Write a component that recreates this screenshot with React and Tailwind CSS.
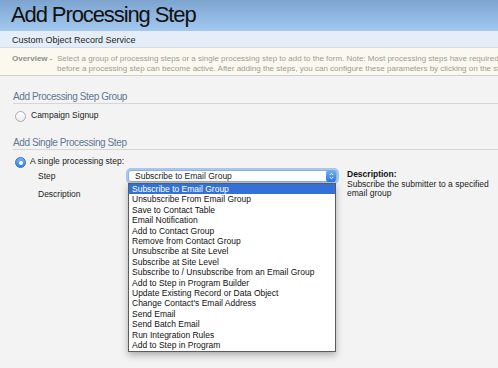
import React from "react";

const steps = [
  "Subscribe to Email Group",
  "Unsubscribe From Email Group",
  "Save to Contact Table",
  "Email Notification",
  "Add to Contact Group",
  "Remove from Contact Group",
  "Unsubscribe at Site Level",
  "Subscribe at Site Level",
  "Subscribe to / Unsubscribe from an Email Group",
  "Add to Step in Program Builder",
  "Update Existing Record or Data Object",
  "Change Contact's Email Address",
  "Send Email",
  "Send Batch Email",
  "Run Integration Rules",
  "Add to Step in Program",
];

const Radio = ({ checked }) =>
  checked ? (
    <span className="flex h-[11px] w-[11px] shrink-0 items-center justify-center rounded-full border border-[#2f6fc9] bg-gradient-to-b from-[#7ab4f5] to-[#2f7ee3]">
      <span className="h-[4px] w-[4px] rounded-full bg-white" />
    </span>
  ) : (
    <span className="h-[11px] w-[11px] shrink-0 rounded-full border border-[#a9a9a9] bg-gradient-to-b from-white to-[#ececec]" />
  );

export default function App() {
  return (
    <div className="h-[368px] w-[498px] overflow-hidden bg-[#f3f3f3] font-['Liberation_Sans',Arial,sans-serif] text-[8.5px] text-[#222]">
      {/* Header */}
      <div className="h-[31px] bg-gradient-to-b from-[#7ca4cf] to-[#a3c9f0] pl-[11px]">
        <h1 className="text-[22px] leading-[30px] tracking-[-1.1px] text-[#111]">
          Add Processing Step
        </h1>
      </div>
      <div className="h-[17px] border-b border-[#d3dce8] bg-[#e4edf8] pl-[12px] pt-[3px] text-[9px] leading-[13px] text-[#1e1e1e]">
        Custom Object Record Service
      </div>

      {/* Overview */}
      <div className="flex h-[28px] border-b border-[#cfcfcf] bg-[#fbf9ee] pl-[12px] pt-[6px] text-[8px] leading-[10px] text-[#9b9b9b]">
        <span className="w-[45px] shrink-0 font-bold text-[#8e8e8e]">Overview -</span>
        <div className="whitespace-nowrap">
          <div>
            Select a group of processing steps or a single processing step to add to the form. Note: Most processing steps have required parameters that must be configured
          </div>
          <div>
            before a processing step can become active. After adding the steps, you can configure these parameters by clicking on the step name.
          </div>
        </div>
      </div>

      {/* Group */}
      <h2 className="ml-[13px] mt-[15px] border-b border-[#d6d6d6] text-[10px] leading-[12px] tracking-[-0.4px] text-[#5f7893]">
        Add Processing Step Group
      </h2>
      <div className="mt-[7px] flex items-start pl-[15px]">
        <Radio />
        <span className="ml-[5px] leading-[8px]">Campaign Signup</span>
      </div>

      {/* Single */}
      <h2 className="ml-[13px] mt-[15px] border-b border-[#d6d6d6] text-[10px] leading-[12px] tracking-[-0.4px] text-[#5f7893]">
        Add Single Processing Step
      </h2>
      <div className="mt-[7px] flex items-start pl-[15px]">
        <Radio checked />
        <span className="ml-[4px] leading-[8px]">A single processing step:</span>
      </div>

      <div className="mt-[2px] flex">
        <div className="w-[337px]">
          <div className="flex h-[12px] items-center">
            <span className="w-[128px] shrink-0 pl-[38px] leading-[12px]">Step</span>
            <div className="relative h-[12px] w-[209px]">
              <div className="flex h-full items-center rounded-[3px] border border-[#8fb0dd] bg-white pl-[6px] shadow-[0_0_0_2px_rgba(110,160,230,0.55)]">
                <span className="flex-1 leading-[10px]">Subscribe to Email Group</span>
                <span className="flex h-[12px] w-[10px] items-center justify-center rounded-[3px] bg-gradient-to-b from-[#6fb0f6] to-[#2c78e0]">
                  <svg width="5" height="8" viewBox="0 0 5 8" fill="none" stroke="white" strokeWidth="1">
                    <path d="M0.8 3 L2.5 1.3 L4.2 3" />
                    <path d="M0.8 5 L2.5 6.7 L4.2 5" />
                  </svg>
                </span>
              </div>
              {/* Open list */}
              <ul className="absolute left-0 top-[13px] z-10 w-[208px] border border-[#5c5c5c] bg-white shadow-[0_3px_7px_rgba(0,0,0,0.3)]">
                {steps.map((s, i) => (
                  <li
                    key={s}
                    className={
                      i === 0
                        ? "bg-[#3371d8] pl-[3px] leading-[10.4px] text-white"
                        : "pl-[3px] leading-[10.4px] text-[#111]"
                    }
                  >
                    {s}
                  </li>
                ))}
              </ul>
            </div>
          </div>
          <div className="mt-[6px] pl-[38px] leading-[12px]">Description</div>
        </div>
        <div className="ml-[10px] w-[148px] leading-[9.5px]">
          <div className="font-bold text-[#111]">Description:</div>
          <div>Subscribe the submitter to a specified email group</div>
        </div>
      </div>
    </div>
  );
}
